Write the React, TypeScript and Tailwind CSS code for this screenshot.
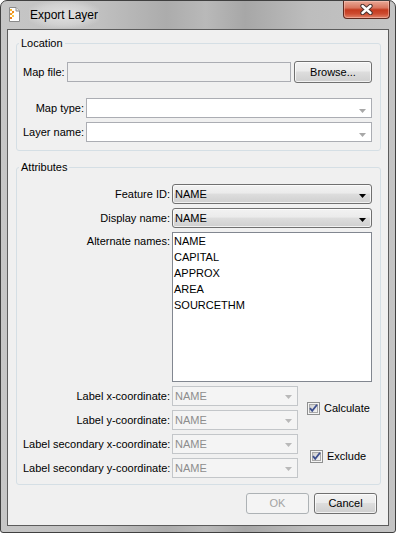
import React from "react";

function SmallArrow({ fill }: { fill: string }) {
  return (
    <svg width="7" height="4" viewBox="0 0 7 4" className="block">
      <path d="M0 0H7L3.5 4Z" fill={fill} />
    </svg>
  );
}

function EditCombo() {
  return (
    <div className="flex-1 h-[20px] bg-white border border-[#abadb3] flex items-center justify-end pr-[5px]">
      <div className="mt-[6px]">
        <SmallArrow fill="#a8a8a8" />
      </div>
    </div>
  );
}

function ROCombo({ text }: { text: string }) {
  return (
    <div className="w-[200px] shrink-0 h-[20px] rounded-[3px] border border-[#707070] bg-[linear-gradient(to_bottom,#f2f2f2_0%,#ebebeb_45%,#dddddd_50%,#cfcfcf_100%)] shadow-[inset_0_0_0_1px_rgba(255,255,255,0.7)] flex items-center pl-[2px] pr-[5px]">
      <span className="flex-1 leading-[18px]">{text}</span>
      <div className="mt-[3px]">
        <SmallArrow fill="#000000" />
      </div>
    </div>
  );
}

function DisCombo() {
  return (
    <div className="w-[126px] shrink-0 h-[20px] border border-[#c3c6c9] bg-[#f4f4f4] flex items-center pl-[2px] pr-[5px]">
      <span className="flex-1 leading-[18px] text-[#8d8d8d]">NAME</span>
      <div className="mt-[2px]">
        <SmallArrow fill="#b9b9b9" />
      </div>
    </div>
  );
}

function CheckBox() {
  return (
    <svg width="13" height="13" viewBox="0 0 13 13" className="block shrink-0">
      <defs>
        <linearGradient id="cbg" x1="0" y1="0" x2="1" y2="1">
          <stop offset="0" stopColor="#cbcbcb" />
          <stop offset="1" stopColor="#f7f7f7" />
        </linearGradient>
      </defs>
      <rect x="0.5" y="0.5" width="12" height="12" fill="#f4f4f4" stroke="#8e8f8f" />
      <rect x="2.5" y="2.5" width="8" height="8" fill="url(#cbg)" stroke="#a9a9a9" />
      <path d="M3 6.2L5.2 8.8L10 2.8" fill="none" stroke="#3d4f8e" strokeWidth="1.8" />
    </svg>
  );
}

function WinIcon() {
  return (
    <svg width="11" height="15" viewBox="0 0 11 15" className="block">
      <path d="M0.5 0.5H7L10.5 4V14.5H0.5Z" fill="#ffffff" stroke="#8a8a8a" />
      <path d="M7 0.5V4H10.5" fill="#e4e4e4" stroke="#8a8a8a" />
      <rect x="1" y="2" width="2" height="2" fill="#f7b733" />
      <rect x="3" y="4" width="2" height="2" fill="#ef8a1c" />
      <rect x="1" y="6" width="2" height="2" fill="#f29a21" />
      <rect x="3" y="8" width="2" height="2" fill="#f7c948" />
      <rect x="1" y="10" width="2" height="2" fill="#ee7f1a" />
      <rect x="3" y="6" width="1" height="1" fill="#fbd36b" />
    </svg>
  );
}

function CloseButton() {
  return (
    <div className="w-[47px] h-[18px] rounded-b-[4px] border border-t-0 border-[#5e2a20] bg-[linear-gradient(to_bottom,#e9a896_0%,#d9765f_40%,#c43a1f_52%,#cd4b30_75%,#e0846b_100%)] shadow-[inset_0_0_0_1px_rgba(255,210,200,0.45)] flex items-center justify-center">
      <svg width="15" height="11" viewBox="0 0 15 11" className="block">
        <path d="M3.5 2L11.5 9M11.5 2L3.5 9" stroke="#4a3330" strokeWidth="4.4" strokeLinecap="round" />
        <path d="M3.5 2L11.5 9M11.5 2L3.5 9" stroke="#ffffff" strokeWidth="2.4" strokeLinecap="round" />
      </svg>
    </div>
  );
}

const btn =
  "h-[21px] w-[63px] rounded-[3px] border border-[#707070] bg-[linear-gradient(to_bottom,#f2f2f2_0%,#ebebeb_45%,#dddddd_50%,#cfcfcf_100%)] shadow-[inset_0_0_0_1px_rgba(255,255,255,0.7)] flex items-center justify-center text-black";

const lbl = "w-[149px] shrink-0 pr-[2px] text-right whitespace-nowrap";

export default function App() {
  return (
    <div className="w-[396px] h-[533px] font-['Liberation_Sans',Arial,sans-serif] text-[11px] text-black">
      <div className="w-[396px] h-[533px] border border-[#404040] rounded-t-[7px] rounded-b-[3px] px-[6px] pb-[6px] flex flex-col bg-[linear-gradient(to_right,#c6c6c6_0%,#c0c0c0_25%,#acacac_42%,#b9b9b9_52%,#a7a7a7_62%,#bdbdbd_78%,#c4c4c4_100%)]">
        {/* title bar */}
        <div className="h-[28px] flex items-start">
          <div className="ml-[2px] mt-[6px]">
            <WinIcon />
          </div>
          <div className="ml-[9px] h-[27px] flex items-center px-[1px] text-[12px] text-black whitespace-nowrap bg-[radial-gradient(ellipse_at_center,rgba(230,230,230,0.85)_0%,rgba(230,230,230,0.4)_55%,rgba(230,230,230,0)_80%)]">
            Export Layer
          </div>
          <div className="ml-auto -mr-[1px]">
            <CloseButton />
          </div>
        </div>

        {/* client */}
        <div className="w-[382px] h-[497px] border border-[#5c5c5c] bg-[#f0f0f0] flex flex-col">
          {/* Location */}
          <fieldset className="mt-[6px] ml-[8px] mr-[7px] border border-[#d5dfe5] rounded-[3px] p-0">
            <legend className="ml-[2px] px-[2px] leading-[14px]">Location</legend>
            <div className="pt-[11px] pb-[8px] pl-[6px] pr-[8px] flex flex-col">
              <div className="flex items-center h-[22px]">
                <span className="w-[44px] shrink-0 whitespace-nowrap">Map file:</span>
                <div className="flex-1 h-[20px] border border-[#abadb3] bg-[#f0f0f0]" />
                <div className="ml-[3px] w-[78px] shrink-0 h-[22px] rounded-[3px] border border-[#707070] bg-[linear-gradient(to_bottom,#f2f2f2_0%,#ebebeb_45%,#dddddd_50%,#cfcfcf_100%)] shadow-[inset_0_0_0_1px_rgba(255,255,255,0.7)] flex items-center justify-center">
                  Browse...
                </div>
              </div>
              <div className="flex items-center h-[20px] mt-[15px]">
                <span className="w-[63px] shrink-0 pr-[2px] text-right whitespace-nowrap">Map type:</span>
                <EditCombo />
              </div>
              <div className="flex items-center h-[20px] mt-[4px]">
                <span className="w-[63px] shrink-0 pr-[2px] text-right whitespace-nowrap">Layer name:</span>
                <EditCombo />
              </div>
            </div>
          </fieldset>

          {/* Attributes */}
          <fieldset className="mt-[9px] ml-[8px] mr-[7px] border border-[#d5dfe5] rounded-[3px] p-0">
            <legend className="ml-[2px] px-[2px] leading-[14px]">Attributes</legend>
            <div className="pt-[10px] pb-[6px] pl-[6px] pr-[8px] flex flex-col gap-[4px]">
              <div className="flex items-center h-[20px]">
                <span className={lbl}>Feature ID:</span>
                <ROCombo text="NAME" />
              </div>
              <div className="flex items-center h-[20px]">
                <span className={lbl}>Display name:</span>
                <ROCombo text="NAME" />
              </div>
              <div className="flex items-start">
                <span className={lbl + " pt-[1px] leading-[16px]"}>Alternate names:</span>
                <div className="w-[200px] shrink-0 h-[150px] bg-white border border-[#828790] pl-[1px] leading-[16px] flex flex-col">
                  <span>NAME</span>
                  <span>CAPITAL</span>
                  <span>APPROX</span>
                  <span>AREA</span>
                  <span>SOURCETHM</span>
                </div>
              </div>
              <div className="flex">
                <div className="flex flex-col gap-[4px] shrink-0">
                  <div className="flex items-center h-[20px]">
                    <span className={lbl}>Label x-coordinate:</span>
                    <DisCombo />
                  </div>
                  <div className="flex items-center h-[20px]">
                    <span className={lbl}>Label y-coordinate:</span>
                    <DisCombo />
                  </div>
                  <div className="flex items-center h-[20px]">
                    <span className={lbl}>Label secondary x-coordinate:</span>
                    <DisCombo />
                  </div>
                  <div className="flex items-center h-[20px]">
                    <span className={lbl}>Label secondary y-coordinate:</span>
                    <DisCombo />
                  </div>
                </div>
                <div className="flex flex-col gap-[4px]">
                  <div className="h-[44px] flex items-center pl-[9px] gap-[4px] whitespace-nowrap">
                    <CheckBox />
                    <span>Calculate</span>
                  </div>
                  <div className="h-[44px] flex items-center pl-[12px] gap-[4px] whitespace-nowrap">
                    <CheckBox />
                    <span>Exclude</span>
                  </div>
                </div>
              </div>
            </div>
          </fieldset>

          {/* buttons */}
          <div className="mt-[8px] flex justify-end gap-[5px] pr-[11px]">
            <div className="h-[21px] w-[63px] rounded-[3px] border border-[#adb2b5] bg-[#f4f4f4] flex items-center justify-center text-[#a3a3a3]">
              OK
            </div>
            <div className={btn}>Cancel</div>
          </div>
        </div>
      </div>
    </div>
  );
}
